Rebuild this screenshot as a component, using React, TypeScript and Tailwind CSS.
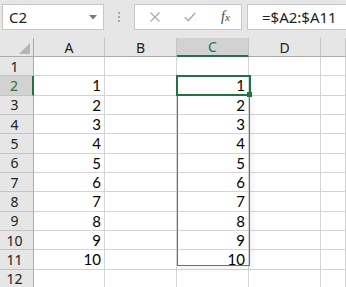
import React from 'react';

const cols = ['A', 'B', 'C', 'D', ''];
const colWidths = ['w-[71px]', 'w-[72px]', 'w-[72px]', 'w-[72px]', 'flex-1'];
const rows = Array.from({ length: 12 }, (_, i) => i + 1);

function valueFor(row: number, col: string) {
  if (row < 2 || row > 11) return '';
  if (col === 'A' || col === 'C') return String(row - 1);
  return '';
}

export default function App() {
  return (
    <div
      className="relative h-[287px] w-[346px] overflow-hidden bg-[#e6e6e6] text-[#222]"
      style={{ fontFamily: '"Noto Sans", "Open Sans", sans-serif' }}
    >
      {/* formula bar */}
      <div className="flex h-[38px] items-start pl-[2px] pt-[4px]">
        <div className="flex h-[26px] w-[102px] items-center justify-between border border-[#c6c6c6] bg-white pl-[6px] pr-[6px]">
          <span className="text-[15px] leading-none">C2</span>
          <svg width="8" height="5" viewBox="0 0 8 5">
            <path d="M0 0 L8 0 L4 4.5 Z" fill="#7a7a7a" />
          </svg>
        </div>
        <div className="flex h-[26px] w-[30px] flex-col items-center justify-center gap-[2px]">
          <span className="block h-[2px] w-[2px] bg-[#a8a8a8]" />
          <span className="block h-[2px] w-[2px] bg-[#a8a8a8]" />
          <span className="block h-[2px] w-[2px] bg-[#a8a8a8]" />
        </div>
        <div className="flex h-[26px] w-[108px] items-center border border-[#c6c6c6] bg-white">
          <div className="flex w-[37px] justify-center pl-[2px]">
            <svg width="10" height="10" viewBox="0 0 10 10">
              <path d="M0.5 0.5 L9.5 9.5 M9.5 0.5 L0.5 9.5" stroke="#a9a9a9" strokeWidth="1.2" fill="none" />
            </svg>
          </div>
          <div className="flex w-[36px] justify-center">
            <svg width="12" height="10" viewBox="0 0 12 10">
              <path d="M0.8 5.2 L4.3 8.8 L11.3 0.8" stroke="#a9a9a9" strokeWidth="1.4" fill="none" />
            </svg>
          </div>
          <div className="flex flex-1 justify-center pl-[2px]">
            <span
              className="text-[14px] italic leading-none text-[#444]"
              style={{ fontFamily: '"Liberation Serif", serif' }}
            >
              f<span className="text-[11px]">x</span>
            </span>
          </div>
        </div>
        <div className="ml-[5px] flex h-[26px] flex-1 items-center border border-r-0 border-[#c6c6c6] bg-white pl-[14px]">
          <span className="text-[15px] leading-none">=$A2:$A11</span>
        </div>
      </div>

      {/* grid */}
      <div className="relative">
        <div className="flex h-[19px]">
          <div className="relative h-full w-[34px] border-b border-r border-[#ababab] bg-[#e6e6e6]">
            <svg className="absolute right-[3px] bottom-[2px]" width="11" height="11" viewBox="0 0 11 11">
              <path d="M11 0 L11 11 L0 11 Z" fill="#b5b5b5" />
            </svg>
          </div>
          {cols.map((c, i) => (
            <div
              key={i}
              className={`${colWidths[i]} flex h-full items-center justify-center border-r border-[#c4c4c4] text-[14px] ${
                c === 'C'
                  ? 'border-b-2 border-b-[#217346] bg-[#d2d2d2] text-[#217346]'
                  : 'border-b border-b-[#ababab] bg-[#e6e6e6]'
              }`}
            >
              {c}
            </div>
          ))}
        </div>
        {rows.map((r) => (
          <div key={r} className="flex h-[19.33px]">
            <div
              className={`flex h-full w-[34px] items-center justify-center border-b border-[#c4c4c4] pr-[4px] text-[14px] ${
                r === 2
                  ? 'border-r-2 border-r-[#217346] bg-[#d2d2d2] text-[#217346]'
                  : 'border-r border-r-[#ababab] bg-[#e6e6e6]'
              }`}
            >
              {r}
            </div>
            {cols.map((c, i) => (
              <div
                key={i}
                className={`${colWidths[i]} flex h-full items-center justify-end border-b border-r border-[#d4d4d4] bg-white pr-[3px] text-[15px] text-black`}
                style={{ fontFamily: 'Lato, "Liberation Sans", sans-serif' }}
              >
                {valueFor(r, c)}
              </div>
            ))}
          </div>
        ))}

        {/* selection overlays */}
        <div className="pointer-events-none absolute left-[177px] top-[38px] h-[190px] w-[73px] border border-[#4472c4] shadow-[3px_3px_5px_rgba(0,0,0,0.05)]" />
        <div className="pointer-events-none absolute left-[176px] top-[37px] h-[21px] w-[75px] border-2 border-[#217346]" />
        <div className="pointer-events-none absolute left-[247px] top-[54px] h-[5px] w-[5px] bg-[#217346]" />
      </div>
    </div>
  );
}
